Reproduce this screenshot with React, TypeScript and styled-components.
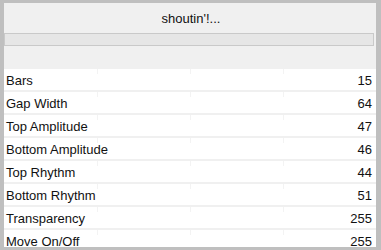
import styled, { createGlobalStyle } from 'styled-components';

const params = [
  { name: 'Bars', value: 15 },
  { name: 'Gap Width', value: 64 },
  { name: 'Top Amplitude', value: 47 },
  { name: 'Bottom Amplitude', value: 46 },
  { name: 'Top Rhythm', value: 44 },
  { name: 'Bottom Rhythm', value: 51 },
  { name: 'Transparency', value: 255 },
  { name: 'Move On/Off', value: 255 },
];

const GlobalStyle = createGlobalStyle`
  html, body {
    margin: 0;
    padding: 0;
    background: #bfbfbf;
  }
  * {
    box-sizing: border-box;
  }
`;

const App = () => {
  return (
    <>
      <GlobalStyle />
      <Frame>
        <Panel>
          <Title>shoutin'!...</Title>
          <Progress />
          <Spacer />
          <List>
            {params.map((el, idx) => {
              return (
                <Row key={idx}>
                  <span>{el.name}</span>
                  <span>{el.value}</span>
                  <Tick $left={93} />
                  <Tick $left={186} />
                  <Tick $left={279} />
                </Row>
              );
            })}
          </List>
        </Panel>
      </Frame>
    </>
  );
};

const Frame = styled.div`
  width: 381px;
  height: 250px;
  padding: 3px 5px 3px 4px;
  background: #bfbfbf;
  overflow: hidden;
`;

const Panel = styled.div`
  height: 100%;
  background: #f0f0f0;
  display: flex;
  flex-direction: column;
  overflow: hidden;
  font-family: 'Liberation Sans', Arial, sans-serif;
  font-size: 13px;
  color: #111;
  & > * {
    flex: none;
  }
`;

const Title = styled.div`
  height: 30px;
  display: flex;
  align-items: center;
  justify-content: center;
  padding-left: 2px;
`;

const Progress = styled.div`
  height: 13px;
  margin-right: 2px;
  border: 1px solid #c9c9c9;
  background: #e6e6e6;
`;

const Spacer = styled.div`
  height: 23px;
`;

const List = styled.div`
  display: flex;
  flex-direction: column;
  gap: 2px;
`;

const Row = styled.div`
  position: relative;
  flex: none;
  height: 21px;
  background: #fff;
  display: flex;
  align-items: center;
  justify-content: space-between;
  padding: 1px 4px 0 2px;
  line-height: 1;
`;

const Tick = styled.i<{ $left: number }>`
  position: absolute;
  top: 0;
  left: ${({ $left }) => $left}px;
  width: 1px;
  height: 5px;
  background: #f3f3f3;
`;

export default App;
